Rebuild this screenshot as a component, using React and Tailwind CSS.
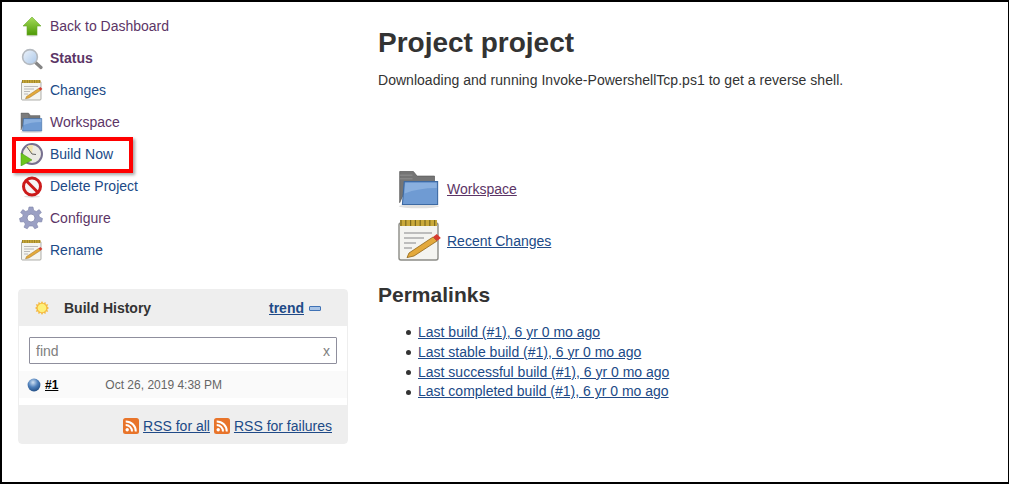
const PURPLE = 'text-[#5c3566]';
const BLUE = 'text-[#204a87]';

function ArrowIcon({ className }) {
  return (
    <svg className={className} viewBox="0 0 24 24">
      <defs>
        <linearGradient id="arrowFill" x1="0" y1="0" x2="0" y2="1">
          <stop offset="0" stopColor="#a6dc5a" />
          <stop offset="1" stopColor="#4e9a06" />
        </linearGradient>
      </defs>
      <ellipse cx="13" cy="21.5" rx="6" ry="1.2" fill="#dddddd" />
      <path d="M13 3 L22 12 H18 V21 H8 V12 H4 Z" fill="url(#arrowFill)" stroke="#6aa92a" strokeWidth="0.6" />
    </svg>
  );
}

function SearchIcon({ className }) {
  return (
    <svg className={className} viewBox="0 0 24 24">
      <defs>
        <linearGradient id="lensFill" x1="0" y1="0" x2="1" y2="1">
          <stop offset="0" stopColor="#eef4fb" />
          <stop offset="1" stopColor="#a9c6e8" />
        </linearGradient>
      </defs>
      <path d="M16.5 16.5 L22 21.5" stroke="#858585" strokeWidth="3.2" strokeLinecap="round" />
      <circle cx="11" cy="11" r="7.4" fill="url(#lensFill)" stroke="#b4b9bf" strokeWidth="1.6" />
    </svg>
  );
}

function NotepadIcon({ className }) {
  return (
    <svg className={className} viewBox="0 0 24 24">
      <rect x="2.5" y="3.5" width="19.5" height="18.5" rx="1" fill="#f4f4f0" stroke="#8c8c86" strokeWidth="0.7" />
      <rect x="3" y="2" width="18.5" height="3" fill="#c9a93a" />
      <path d="M3.5 2 V5 M5.9 2 V5 M8.3 2 V5 M10.7 2 V5 M13.1 2 V5 M15.5 2 V5 M17.9 2 V5 M20.3 2 V5" stroke="#7d6a1e" strokeWidth="0.6" />
      <path d="M5 8.5 H19 M5 11 H15 M5 13.5 H11 M5 16 H9" stroke="#ababab" strokeWidth="0.8" />
      <path d="M7.5 18.5 L19.5 10.5 L21.5 12.5 L10 20 L6.5 20.8 Z" fill="#e3a93c" stroke="#8f6516" strokeWidth="0.4" />
      <path d="M19.5 10.5 L21.5 12.5 L23.4 11 L21.4 9 Z" fill="#d63b30" />
    </svg>
  );
}

function FolderIcon({ className }) {
  return (
    <svg className={className} viewBox="0 0 24 24">
      <ellipse cx="12.5" cy="22" rx="11" ry="1" fill="#e0e0e0" />
      <path d="M2 20 V3 H9.5 L11.5 5.5 H21 V9 H7 Z" fill="#757575" stroke="#5c5c5c" strokeWidth="0.4" />
      <path d="M2 7 H9 M2 5 H9" stroke="#939393" strokeWidth="0.5" />
      <path d="M3.5 21 L4.5 8.5 H22.7 L22.7 21 Z" fill="#6f9bd3" stroke="#3d6aa3" strokeWidth="0.6" />
      <path d="M5 9.2 H22.2 V12 Q12 12 4.7 15 Z" fill="#8ab0df" />
    </svg>
  );
}

function BuildIcon({ className }) {
  return (
    <svg className={className} viewBox="0 0 24 24">
      <circle cx="13" cy="12" r="10" fill="#ecebe4" stroke="#77708f" strokeWidth="2" />
      <path d="M13 12 L7.5 4.5 A9 9 0 0 1 14 3.2 Z" fill="#efe3ad" />
      <path d="M13 12 L8 5 M13 12 L17 12.5" stroke="#555555" strokeWidth="0.9" />
      <path d="M2 11 L13 18 L2 24 Z" fill="#6cc51e" stroke="#3f8f10" strokeWidth="0.5" />
    </svg>
  );
}

function DeleteIcon({ className }) {
  return (
    <svg className={className} viewBox="0 0 24 24">
      <ellipse cx="13" cy="22.5" rx="8" ry="1.2" fill="#dedede" />
      <circle cx="13" cy="12.5" r="8.5" fill="#f6f6f6" stroke="#cc1b1b" strokeWidth="3" />
      <path d="M7 6.5 L19 18.5" stroke="#cc1b1b" strokeWidth="3" />
    </svg>
  );
}

function GearIcon({ className }) {
  return (
    <svg className={className} viewBox="0 0 24 24">
      <path
        d="M10 1 H14 L14.7 4.4 L17.3 5.5 L20.2 3.6 L22.4 6.5 L19.8 8.8 L20.4 11 L23.5 12.5 L22.6 16 L19.2 15.7 L17.6 18 L19 21.2 L15.8 22.8 L13.8 20 H10.2 L8.2 22.8 L5 21.2 L6.4 18 L4.8 15.7 L1.4 16 L0.5 12.5 L3.6 11 L4.2 8.8 L1.6 6.5 L3.8 3.6 L6.7 5.5 L9.3 4.4 Z"
        fill="#9ba0c4"
        stroke="#7d83a8"
        strokeWidth="0.6"
      />
      <circle cx="12" cy="12" r="4" fill="#ffffff" stroke="#7d83a8" strokeWidth="0.8" />
    </svg>
  );
}

function SunIcon({ className }) {
  return (
    <svg className={className} viewBox="0 0 16 16">
      <path
        d="M8 1 L9.3 3.2 L11.5 2 L11.8 4.4 L14.2 4.2 L13.2 6.4 L15 8 L13.2 9.6 L14.2 11.8 L11.8 11.6 L11.5 14 L9.3 12.8 L8 15 L6.7 12.8 L4.5 14 L4.2 11.6 L1.8 11.8 L2.8 9.6 L1 8 L2.8 6.4 L1.8 4.2 L4.2 4.4 L4.5 2 L6.7 3.2 Z"
        fill="#f5b93f"
      />
      <circle cx="8" cy="8" r="4.3" fill="#fdf07a" />
    </svg>
  );
}

function BallIcon({ className }) {
  return (
    <svg className={className} viewBox="0 0 14 14">
      <defs>
        <radialGradient id="ballFill" cx="0.42" cy="0.3" r="0.75">
          <stop offset="0" stopColor="#cfe0f2" />
          <stop offset="0.5" stopColor="#4f80bb" />
          <stop offset="1" stopColor="#1f4a80" />
        </radialGradient>
      </defs>
      <circle cx="7" cy="7" r="6.4" fill="url(#ballFill)" />
    </svg>
  );
}

function RssIcon({ className }) {
  return (
    <svg className={className} viewBox="0 0 16 16">
      <rect width="16" height="16" rx="2.5" fill="#e8742a" />
      <circle cx="4.2" cy="11.8" r="1.7" fill="#ffffff" />
      <path d="M2.7 7 A6.4 6.4 0 0 1 9 13.4 M2.7 3.4 A10 10 0 0 1 12.8 13.4" fill="none" stroke="#ffffff" strokeWidth="2" />
    </svg>
  );
}

const tasks = [
  { label: 'Back to Dashboard', Icon: ArrowIcon, color: PURPLE },
  { label: 'Status', Icon: SearchIcon, color: PURPLE, bold: true },
  { label: 'Changes', Icon: NotepadIcon, color: BLUE },
  { label: 'Workspace', Icon: FolderIcon, color: PURPLE },
  { label: 'Build Now', Icon: BuildIcon, color: BLUE },
  { label: 'Delete Project', Icon: DeleteIcon, color: BLUE },
  { label: 'Configure', Icon: GearIcon, color: PURPLE },
  { label: 'Rename', Icon: NotepadIcon, color: BLUE },
];

const permalinks = [
  'Last build (#1), 6 yr 0 mo ago',
  'Last stable build (#1), 6 yr 0 mo ago',
  'Last successful build (#1), 6 yr 0 mo ago',
  'Last completed build (#1), 6 yr 0 mo ago',
];

function BuildHistory() {
  return (
    <div className="ml-[16px] w-[330px] rounded border border-[#eeeeee] mt-[23px]">
      <div className="h-[36px] bg-[#eeeeee] flex items-center pl-[15px] pr-[26px]">
        <SunIcon className="w-4 h-4" />
        <span className="ml-[14px] font-bold text-[#333333]">Build History</span>
        <a className={`ml-auto font-bold underline ${BLUE}`}>trend</a>
        <span className="ml-[5px] w-3 h-[5px] rounded-[1px] border border-[#3f72b5] bg-[#a9c4e6]" />
      </div>
      <div className="px-[10px] pt-[11px] pb-[7px]">
        <div className="h-[27px] border border-[#8f8f9d] rounded-[1px] flex items-center justify-between pl-[6px] pr-[6px] text-[#808080]">
          <span>find</span>
          <span>x</span>
        </div>
      </div>
      <div className="h-[27px] bg-[#fafafa] flex items-center text-[12px] text-[#666666] pl-[8px]">
        <BallIcon className="w-[14px] h-[14px]" />
        <a className="ml-[4px] font-bold underline text-[#000000]">#1</a>
        <span className="ml-[47px]">Oct 26, 2019 4:38 PM</span>
      </div>
      <div className="h-[38px] mt-[7px] pt-[3px] bg-[#eeeeee] flex items-center justify-end pr-[15px]">
        <RssIcon className="w-4 h-4" />
        <a className={`ml-[4px] underline ${BLUE}`}>RSS for all</a>
        <RssIcon className="w-4 h-4 ml-[4px]" />
        <a className={`ml-[4px] underline ${BLUE}`}>RSS for failures</a>
      </div>
    </div>
  );
}

export default function App() {
  return (
    <div className="relative w-[1009px] h-[484px] bg-white border-t-2 border-l-2 border-b-2 border-r border-black text-[14px] leading-[18px] text-[#333333] font-['Liberation_Sans',Arial,sans-serif] flex">
      <div className="w-[376px] shrink-0 pt-2">
        <div>
          {tasks.map(({ label, Icon, color, bold }) => (
            <div key={label} className="h-8 flex items-center pl-[17px]">
              <Icon className="w-6 h-6" />
              <a className={`ml-[7px] ${color} ${bold ? 'font-bold' : ''}`}>{label}</a>
            </div>
          ))}
        </div>
        <BuildHistory />
      </div>

      <div className="flex-1">
        <h1 className="mt-[23px] text-[28px] leading-[36px] font-bold text-[#333333]">Project project</h1>
        <p className="mt-[10px] tracking-[0.03px]">Downloading and running Invoke-PowershellTcp.ps1 to get a reverse shell.</p>

        <div className="mt-[74px] pl-[18px]">
          <div className="h-[52px] flex items-center">
            <FolderIcon className="w-11 h-11 mr-[7px] shrink-0 -mt-[2px]" />
            <a className={`underline ${PURPLE}`}>Workspace</a>
          </div>
          <div className="h-[52px] flex items-center">
            <NotepadIcon className="w-12 h-12 -ml-[2px] mr-[5px] shrink-0 -mt-[2px]" />
            <a className={`underline ${BLUE}`}>Recent Changes</a>
          </div>
        </div>

        <h2 className="mt-[14px] text-[21px] leading-[28px] font-bold text-[#333333]">Permalinks</h2>
        <ul className="mt-[14px] pl-[28px] leading-[19.75px]">
          {permalinks.map((link) => (
            <li key={link} className="flex items-center">
              <span className="w-[5px] h-[5px] rounded-full bg-[#333333] mr-[7px]" />
              <a className={`underline ${BLUE}`}>{link}</a>
            </li>
          ))}
        </ul>
      </div>

      <div className="absolute left-[10px] top-[135px] w-[121px] h-[36px] border-4 border-[#ff0000] shadow-[2px_2px_3px_rgba(0,0,0,0.35)]" />
    </div>
  );
}
